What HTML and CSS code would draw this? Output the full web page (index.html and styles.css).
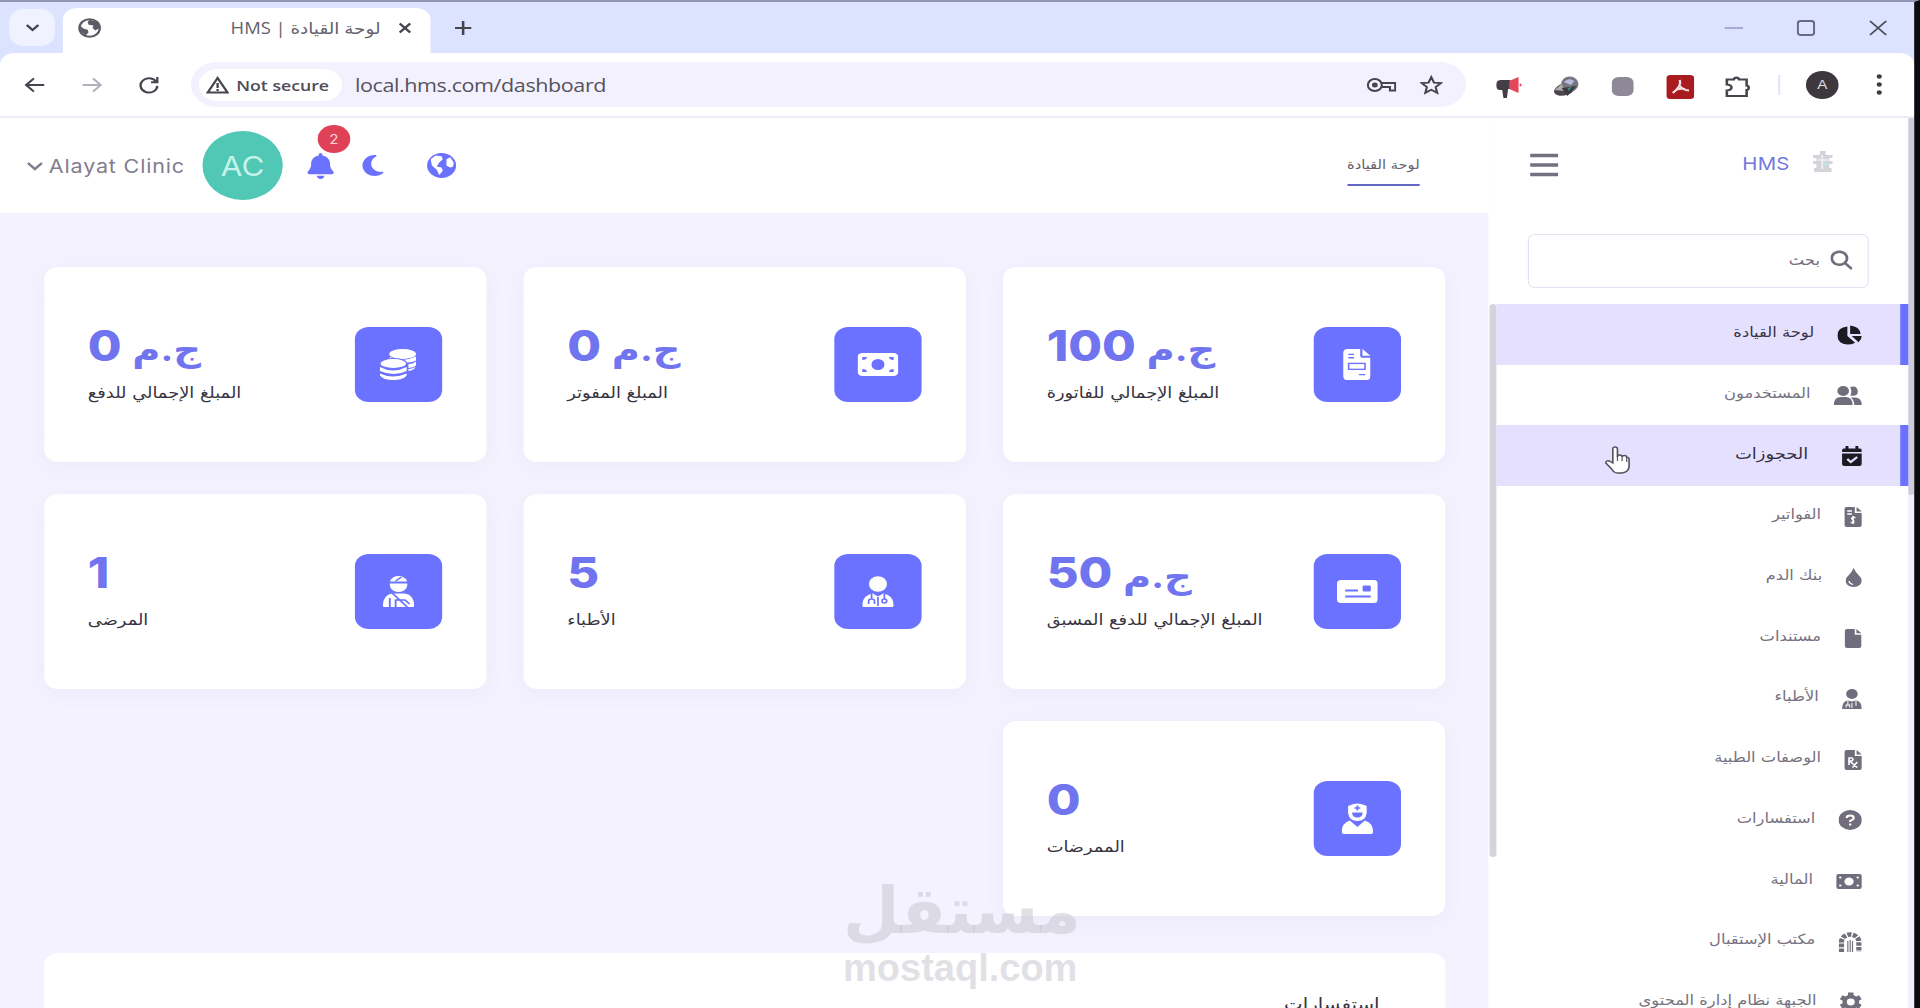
FILE: index.html
```html
<!DOCTYPE html>
<html lang="ar">
<head>
    <meta charset="UTF-8">
    <meta name="viewport" content="width=device-width, initial-scale=1.0">
    <title>HMS | لوحة القيادة</title>
    <link rel="stylesheet" href="styles.css">
</head>
<body>
    <div class="window">
        <!-- Tabs -->
        <div class="tabstrip">
            <div class="tab-menu"><svg width="14" height="9" viewBox="0 0 14 9"><path class="line" d="M2 2l5 5 5-5"/></svg></div>
            <div class="tab">
                <svg class="favicon" width="20" height="20" viewBox="0 0 24 24"><circle cx="12" cy="12" r="10.5" fill="#fff" stroke="#5d5a66" stroke-width="2.4"/><path fill="#5d5a66" d="M2 9l4 4 4 1 1 3-3 4-5-5zM12 2l8 3 2 7-4 3-3-3 1-3-5-1-1-3z"/></svg>
                <span class="tab-title" dir="rtl">لوحة القيادة | HMS</span>
                <svg width="12" height="12" viewBox="0 0 12 12"><path class="line" d="M1.5 1.5l9 9M10.5 1.5l-9 9"/></svg>
            </div>
            <svg class="new-tab" width="16" height="16" viewBox="0 0 16 16"><path class="line" d="M8 1v14M1 8h14"/></svg>
            <div class="win-controls">
                <svg width="16" height="18" viewBox="0 0 16 18"><path d="M0 9h16" stroke="#a9a8cf" stroke-width="2"/></svg>
                <svg width="16" height="18" viewBox="0 0 16 18"><rect x="1" y="2" width="14" height="14" rx="2.5" fill="none" stroke="#6c6880" stroke-width="1.8"/></svg>
                <svg width="16" height="18" viewBox="0 0 16 18"><path d="M1 2l14 14M15 2L1 16" stroke="#4d4a58" stroke-width="1.7"/></svg>
            </div>
        </div>

        <!-- Address bar -->
        <div class="toolbar">
            <div class="nav-buttons">
                <svg width="18" height="16" viewBox="0 0 20 18"><path class="line" d="M19 9H2M9 1.500L1.500 9L9 16.500"/></svg>
                <svg width="18" height="16" viewBox="0 0 20 18"><path class="line muted" d="M1 9h17M11 1.500L18.500 9L11 16.500"/></svg>
                <svg width="18" height="18" viewBox="0 0 20 20"><path class="line" d="M17 6.500A8 8 0 1 0 18 11M18 1v6h-6"/></svg>
            </div>
            <div class="omnibox">
                <div class="not-secure">
                    <svg width="20" height="18" viewBox="0 0 20 18"><path d="M10 2L1.500 16.500h17z" fill="none" stroke="#47444e" stroke-width="2"/><path d="M10 7v5M10 13v2" stroke="#47444e" stroke-width="2"/></svg>
                    <span>Not secure</span>
                </div>
                <span class="url">local.hms.com/dashboard</span>
                <svg class="key" width="26" height="16" viewBox="0 0 26 16"><circle cx="7.500" cy="8" r="6" class="line thin"/><circle cx="7.500" cy="8" r="2.500" fill="#47444e"/><path class="line thin" d="M13 6h12v7.500h-4.500V10H13"/></svg>
                <svg class="star" width="20" height="20" viewBox="0 0 24 24"><path class="line" d="M12 2.500l2.800 6.600 7.100.6-5.400 4.700 1.600 7L12 17.700l-6.100 3.700 1.600-7L2.100 9.700l7.100-.6z"/></svg>
            </div>
            <div class="extensions">
                <svg width="24" height="22" viewBox="0 0 24 22"><path d="M1 8q0-4 4-4h8v9h-2l-1 9H7l-1-8H4Q1 14 1 10z" fill="#433e45"/><path d="M12 5l8-4v16l-8-4z" fill="#e4475a"/><path d="M21 7l2 2-2 2z" fill="#e4475a"/></svg>
                <svg width="24" height="22" viewBox="0 0 24 22"><ellipse cx="11" cy="13" rx="10" ry="6" transform="rotate(-24 11 13)" fill="#4b484d"/><circle cx="15" cy="8" r="7.500" fill="#77757f"/><path d="M10 6q4-5 9-1l-3 4z" fill="#b9bce0"/><path d="M2 14l6-6 3 7z" fill="#b1aaa9"/><path d="M8 12l13-2-8 10z" fill="#3c3a3f"/><path d="M13 12l4-1-3 4z" fill="#3f8f83"/></svg>
                <svg width="19" height="20" viewBox="0 0 19 20"><rect width="19" height="19" rx="6" fill="#8d8996"/></svg>
                <svg width="24" height="24" viewBox="0 0 24 24"><rect width="24" height="24" rx="3.500" fill="#a81c1f"/><path d="M11.500 5q2 6-6 13M11.500 11q3 4 8 4.500M8 15q4-2 8-1" fill="none" stroke="#f8dfe0" stroke-width="2"/></svg>
                <svg width="24" height="24" viewBox="0 0 24 24"><path class="line" d="M3 4.500h6a2.300 2.300 0 0 1 4.500 0H20v6a2.300 2.300 0 0 1 0 4.500v6H3v-5.500q4-.5 4-3t-4-3z"/></svg>
            </div>
            <div class="chrome-avatar">A</div>
            <svg class="dots" width="6" height="24" viewBox="0 0 6 24"><circle cx="3" cy="3.500" r="2.200"/><circle cx="3" cy="11.500" r="2.200"/><circle cx="3" cy="19.500" r="2.200"/></svg>
        </div>

        <div class="page">
            <main class="main">
                <header class="header">
                    <svg class="chevron" width="14" height="10" viewBox="0 0 14 10"><path d="M1 2l6 6 6-6" fill="none" stroke="#827c8e" stroke-width="2.300"/></svg>
                    <span class="user-name">Alayat Clinic</span>
                    <div class="avatar">AC</div>
                    <div class="bell">
                        <svg width="23" height="26" viewBox="0 0 448 512"><path d="M224 0c-17.700 0-32 14.300-32 32v19.200C119 66 64 130.600 64 208v18.800c0 47-17.300 92.400-48.500 127.600l-7.400 8.300c-8.400 9.400-10.400 22.900-5.300 34.400S19.400 416 32 416H416c12.600 0 24-7.400 29.200-18.900s3.100-25-5.300-34.400l-7.400-8.300C401.300 319.200 384 273.900 384 226.800V208c0-77.400-55-142-128-156.800V32c0-17.700-14.300-32-32-32zM160 448h128q-6 60-64 64-58-4-64-64z"/></svg>
                        <span class="badge">2</span>
                    </div>
                    <svg class="moon" width="19" height="21" viewBox="0 32 384 448"><path d="M223.500 32C100 32 0 132.300 0 256S100 480 223.500 480c60.600 0 115.500-24.200 155.800-63.400c5-4.900 6.300-12.500 3.100-18.700s-10.100-9.700-17-8.500c-9.800 1.700-19.800 2.600-30.100 2.600c-96.900 0-175.500-78.800-175.500-176c0-65.800 36-123.100 89.300-153.300c6.100-3.500 9.200-10.500 7.700-17.300s-7.300-11.900-14.300-12.500c-6.300-.5-12.600-.8-19-.8z"/></svg>
                    <svg class="globe" width="25" height="25" viewBox="0 0 24 24"><circle cx="12" cy="12" r="12"/><path fill="#fff" d="M3 6l4-3.500 5 .5 1 3-3 3-2 4 4 1 1 3-3 4-2-5-4-4zM16 6l3-2 3 5-.5 4-2.500 1-3-2z"/></svg>
                    <a class="header-title" dir="rtl">لوحة القيادة</a>
                </header>

                <div class="content" dir="rtl">
                    <div class="cards">
                        <div class="card">
                            <div class="tile"><svg width="24" height="31" viewBox="0 0 384 512"><path d="M0 64Q0 0 64 0H240v112q0 32 32 32H384V448q0 64-64 64H64Q0 512 0 448zM272 0l112 112H272z"/><path class="cut" d="M72 90h80M72 144h80M224 424h88"/><rect class="cut" x="76" y="238" width="232" height="98"/></svg></div>
                            <div><div class="value"><small>ج.م</small> 100</div><div class="label">المبلغ الإجمالي للفاتورة</div></div>
                        </div>
                        <div class="card">
                            <div class="tile"><svg width="35" height="23" viewBox="0 0 35 23"><rect width="35" height="23" rx="4"/><circle class="hole" cx="17.500" cy="11.500" r="5.600"/><path class="hole" d="M4 4h4q0 3-4 3zM31 4h-4q0 3 4 3zM4 19h4q0-3-4-3zM31 19h-4q0-3 4-3z"/></svg></div>
                            <div><div class="value"><small>ج.م</small> 0</div><div class="label">المبلغ المفوتر</div></div>
                        </div>
                        <div class="card">
                            <div class="tile"><svg width="32" height="31" viewBox="0 0 32 31"><ellipse cx="20" cy="5" rx="11.500" ry="5"/><path d="M9 8q11 6 22.500-.5v4q-4 2.500-8 2-4-4-14.500-4zM25 15q4 0 6.500-2.500v4q-2 2-6.500 2.500zM25 20q3 0 6-2-1 3-6 4z"/><ellipse cx="12" cy="14.500" rx="11.500" ry="5" stroke="#6b72ff"/><path d="M.5 18q11 7 23 0v4q-11 6-23 0zM.5 24.500q11 6 23 0v2q-3 4.500-11.500 4.500T.5 26.500z"/></svg></div>
                            <div><div class="value"><small>ج.م</small> 0</div><div class="label">المبلغ الإجمالي للدفع</div></div>
                        </div>
                        <div class="card">
                            <div class="tile"><svg width="35" height="23" viewBox="0 0 35 23"><rect width="35" height="23" rx="3.500"/><path d="M7 10.500h11M7 16.500h22" stroke="#6b72ff" stroke-width="1.800"/><rect class="hole" x="22" y="5.500" width="7" height="6" rx="1"/></svg></div>
                            <div><div class="value"><small>ج.م</small> 50</div><div class="label">المبلغ الإجمالي للدفع المسبق</div></div>
                        </div>
                        <div class="card">
                            <div class="tile"><svg width="27" height="31" viewBox="0 0 27 31"><circle cx="13.500" cy="8" r="7.800"/><path d="M0 30v-2q1-9 9-10.500l4.500 3 4.500-3q8 1.500 9 10.500v2q0 1-1 1H1q-1 0-1-1z"/><path d="M8 18v5M5.500 28v-3q0-2 2.500-2t2.500 2v3M19 18v5m-2 2a2 2 0 1 0 4 0 2 2 0 1 0-4 0M13.500 21v9" fill="none" stroke="#6b72ff" stroke-width="1.500"/></svg></div>
                            <div><div class="value">5</div><div class="label">الأطباء</div></div>
                        </div>
                        <div class="card">
                            <div class="tile"><svg width="27" height="31" viewBox="0 0 27 31"><path d="M6 5.500Q8 0 13.500 0T21 5.500zM6 7.500h15v2q-1 6.500-7.500 6.500T6 9.500zM0 30q0-11 8-12.500h11q8 1.500 8 12.500 0 1-1 1H1q-1 0-1-1z"/><path d="M8 17l13 14M11 31v-7l8 0 4 4M6 22v9M11 5l5-4" fill="none" stroke="#6b72ff" stroke-width="1.600"/></svg></div>
                            <div><div class="value">1</div><div class="label">المرضى</div></div>
                        </div>
                        <div class="card">
                            <div class="tile"><svg width="27" height="31" viewBox="0 0 27 31"><path d="M5.500 3q8-5 16 0v7q-1 8-8 8t-8-8zM0 29q0-9 7-11.500l6.500 6.500 6.500-6.500q7 2.500 7 11.500 0 2-2 2H2q-2 0-2-2z"/><path class="hole" d="M9 9.500h9q0 5-4.500 5T9 9.500zM12.700 2.500h1.600v1.700H16v1.600h-1.700v1.700h-1.600V5.800H11V4.200h1.700z"/></svg></div>
                            <div><div class="value">0</div><div class="label">الممرضات</div></div>
                        </div>
                    </div>
                    <section class="panel">
                        <h3 class="panel-title">استفسارات</h3>
                    </section>
                </div>
            </main>

            <aside class="sidebar" dir="rtl">
                <div class="brand">
                    <svg width="17" height="24" viewBox="0 0 17 24" fill="#d5d3da"><path d="M6 0h5v4h6v3h-3v3h3v3h-3v4h2v4H1v-4h2v-4H0v-3h3V7H0V4h6z"/><path d="M8 4v14M4 9h9" stroke="#f1f2f2" stroke-width="1.500"/><path d="M9 11h3v4H9z" fill="#bfe3de"/></svg>
                    <span class="brand-name">HMS</span>
                    <svg class="hamburger" width="26" height="24" viewBox="0 0 26 24"><path d="M1 2.500h24M1 12h24M1 21.500h24" stroke="#75707f" stroke-width="3.500"/></svg>
                </div>
                <div class="search">
                    <svg width="19" height="20" viewBox="0 0 512 512"><path d="M416 208c0 45.900-14.900 88.300-40 122.700L502.600 457.400c12.500 12.500 12.500 32.800 0 45.300s-32.800 12.500-45.300 0L330.700 376c-34.400 25.200-76.800 40-122.700 40C93.100 416 0 322.900 0 208S93.100 0 208 0S416 93.100 416 208zM208 352a144 144 0 1 0 0-288 144 144 0 1 0 0 288z"/></svg>
                    <span>بحث</span>
                </div>
                <nav class="menu">
                    <a class="item active"><svg width="21" height="20" viewBox="0 0 22 20"><path d="M9 1v10l7 7q-3 2-7 2Q0 19 0 10.500T9 1zM11.500 0Q20 1 21 9h-9.500zM13 11h9q0 3.500-3 6.500z"/></svg><span>لوحة القيادة</span></a>
                    <a class="item"><svg width="24" height="19" viewBox="0 0 24 19"><circle cx="8" cy="5" r="5"/><path d="M0 19q0-8 6-8h4q6 0 6 8zM14 9.500q2-4 0-8.500 6-2 6.500 4T14 9.500zM14.500 11.500H18q6 0 6 7.500h-6.500q0-5-3-7.500z"/></svg><span>المستخدمون</span></a>
                    <a class="item active hover"><svg width="17" height="20" viewBox="0 0 17 20"><path d="M3 0h2.500v2.500h6V0H14v2.500h1.500q1.500 0 1.500 2V6H0V4.500q0-2 1.500-2H3zM0 7.500h17V18q0 2-2 2H2q-2 0-2-2z"/><path d="M4.500 13l3 3L13 11" fill="none" stroke="#e6e0ff" stroke-width="2"/></svg><span>الحجوزات</span></a>
                    <a class="item"><svg width="15" height="20" viewBox="0 0 15 20"><path d="M2 0h7v6h6v12q0 2-2 2H2q-2 0-2-2V2q0-2 2-2zM10.500 0L15 4.500h-4.500z"/><path d="M2.500 4h4M2.500 7h4M9.500 10.500H7q-1.500 1 0 2t1 3H5.500M7.500 9v8" fill="none" stroke="#fff" stroke-width="1.300"/></svg><span>الفواتير</span></a>
                    <a class="item"><svg width="14" height="19" viewBox="0 0 14 19"><path d="M7 0q1.500 4 4.500 7.500Q14 10 14 12.500 13.500 19 7 19T0 12.500Q0 10 2.500 7.500 5.500 4 7 0z"/><path d="M3 13q.5 3 3.500 3.500" fill="none" stroke="#fff" stroke-width="1.200"/></svg><span>بنك الدم</span></a>
                    <a class="item"><svg width="15" height="19" viewBox="0 0 15 20"><path d="M2 0h7v6h6v12q0 2-2 2H2q-2 0-2-2V2q0-2 2-2zM10.500 0L15 4.500h-4.500z"/></svg><span>مستندات</span></a>
                    <a class="item"><svg width="17" height="20" viewBox="0 0 17 20"><circle cx="8.500" cy="5" r="5"/><path d="M0 20q0-8 5-8.500l3.500 1 3.500-1q5 .5 5 8.500z"/><path d="M5 12v4M3.500 18.500V16h3v2.500M12 12v5M8.500 14v5" fill="none" stroke="#fff" stroke-width=".9"/></svg><span>الأطباء</span></a>
                    <a class="item"><svg width="15" height="20" viewBox="0 0 15 20"><path d="M2 0h7v6h6v12q0 2-2 2H2q-2 0-2-2V2q0-2 2-2zM10.500 0L15 4.500h-4.500z"/><path d="M4 15V8h2.500q2 1.500 0 3H4.500l6.500 6.500M11 12l-4 5.500" fill="none" stroke="#fff" stroke-width="1.400"/></svg><span>الوصفات الطبية</span></a>
                    <a class="item"><svg width="20" height="20" viewBox="0 0 20 20"><circle cx="10" cy="10" r="10"/><path d="M7 8q0-2.500 3-2.500T13 8q0 1.500-3 2.800V12M10 13.500V15.500" fill="none" stroke="#fff" stroke-width="1.900"/></svg><span>استفسارات</span></a>
                    <a class="item"><svg width="22" height="15" viewBox="0 0 22 15"><rect width="22" height="15" rx="2"/><g fill="#fff"><circle cx="11" cy="7.500" r="4"/><circle cx="3.500" cy="3.500" r="1.100"/><circle cx="18.500" cy="3.500" r="1.100"/><circle cx="3.500" cy="11.500" r="1.100"/><circle cx="18.500" cy="11.500" r="1.100"/></g></svg><span>المالية</span></a>
                    <a class="item"><svg width="20" height="20" viewBox="0 0 20 20"><path d="M2.500 20V10a7.500 7.500 0 0 1 15 0v10" fill="none" stroke="#726d7c" stroke-width="4.500" stroke-dasharray="3.600 1.200"/><path d="M8 9v11M10 8v12M12 9v11" fill="none" stroke="#726d7c" stroke-width="1"/></svg><span>مكتب الإستقبال</span></a>
                    <a class="item"><svg width="19" height="20" viewBox="0 0 20 20"><circle cx="10" cy="10" r="5.600" fill="none" stroke="#726d7c" stroke-width="4"/><path d="M10 0v4M10 16v4M1.300 5l3.500 2M15.200 13l3.500 2M1.300 15l3.500-2M15.200 7l3.500-2" fill="none" stroke="#726d7c" stroke-width="5"/></svg><span>الجبهة نظام إدارة المحتوى</span></a>
                    <div class="menu-scroll"></div>
                    <svg class="cursor" width="24" height="30" viewBox="0 0 24 30"><path d="M8 17V3q0-2 2-2t2 2v8q0-2 2-2t2 2q0-1.500 2-1.500t2 2q2-.5 2 2V20q0 6-6 7h-4q-3 0-5-4l-5-6q0-3 3-2z" fill="#fff" stroke="#55515e" stroke-width="1.400"/><path d="M12 10v5M16 10v5M20 12v4" stroke="#55515e"/></svg>
                </nav>
            </aside>
            <div class="page-scroll"><div class="thumb"></div></div>
        </div>
    </div>

    <div class="watermark">
        <div class="wm-ar">مستقل</div>
        <div class="wm-en">mostaql.com</div>
    </div>
</body>
</html>
```

FILE: styles.css
```css
:root {
    --primary: #6b72ff;
    --page: #f5f2ff;
    --chrome: #dbe3ff;
    --grey: #726d7c;
    --ink: #47444e;
}

* {
    margin: 0;
    padding: 0;
    box-sizing: border-box;
}

body {
    width: 1920px;
    height: 1008px;
    overflow: hidden;
    background: #000;
    font-family: "Liberation Sans", "DejaVu Sans", sans-serif;
}

svg {
    display: block;
    flex: none;
}

/* the desktop is 1650 wide, shown stretched to the full screen */
.window {
    width: 1650px;
    height: 1008px;
    transform: scaleX(1.163636);
    transform-origin: 0 0;
    display: flex;
    flex-direction: column;
    background: var(--chrome);
    border-top: 2px solid #9395b5;
    border-right: 5px solid #0b0b0f;
    overflow: hidden;
}

.line {
    fill: none;
    stroke: var(--ink);
    stroke-width: 2.2;
}

.thin {
    stroke-width: 1.8;
}

.muted {
    stroke: #b4b0bb;
}

/* tabs */
.tabstrip {
    height: 51px;
    flex: none;
    display: flex;
    align-items: center;
    padding: 0 23px 0 8px;
}

.tab-menu {
    width: 39px;
    height: 37px;
    border-radius: 12px;
    background: #f1f2ff;
    display: flex;
    align-items: center;
    justify-content: center;
}

.tab {
    width: 316px;
    height: 45px;
    margin: 6px 0 0 7px;
    padding: 0 16px 6px 13px;
    border-radius: 12px 12px 0 0;
    background: #fff;
    display: flex;
    align-items: center;
}

.tab-title {
    margin-left: auto;
    margin-right: 15px;
    font-family: "Open Sans", "DejaVu Sans", sans-serif;
    font-size: 15.8px;
    color: #65616d;
    white-space: nowrap;
}

.new-tab {
    margin-left: 20px;
}

.win-controls {
    margin-left: auto;
    display: flex;
    gap: 46px;
}

/* toolbar */
.toolbar {
    height: 65px;
    flex: none;
    display: flex;
    align-items: center;
    padding-left: 21px;
    background: #fff;
    border-radius: 12px 12px 0 0;
    border-bottom: 2px solid #f1eaf7;
}

.nav-buttons {
    display: flex;
    align-items: center;
    gap: 31px;
    width: 143px;
}

.omnibox {
    width: 1096px;
    height: 45px;
    border-radius: 23px;
    background: #f4f1ff;
    display: flex;
    align-items: center;
    padding: 0 20px 0 7px;
}

.not-secure {
    width: 123px;
    height: 32px;
    padding-left: 6px;
    border-radius: 16px;
    background: #fff;
    display: flex;
    align-items: center;
    gap: 6px;
    font: 600 15.200px "Open Sans", sans-serif;
    color: #504c57;
    white-space: nowrap;
}

.url {
    margin-left: 11px;
    font: 18.5px "Open Sans", sans-serif;
    letter-spacing: -0.35px;
    color: #56525d;
}

.key {
    margin-left: auto;
}

.star {
    margin-left: 20px;
}

.extensions {
    display: grid;
    grid-template-columns: repeat(5, 49px);
    justify-items: center;
    align-items: center;
    margin-left: 12px;
    padding-right: 12px;
    width: 258px;
    height: 20px;
    border-right: 2px solid #e8e5f6;
}

.chrome-avatar {
    width: 28px;
    height: 28px;
    margin-left: 22px;
    border-radius: 50%;
    background: #3d383e;
    color: #e5dfe4;
    font-size: 13px;
    line-height: 28px;
    text-align: center;
}

.dots {
    margin-left: 32px;
    fill: #3e3b44;
}

/* page */
.page {
    flex: 1;
    min-height: 0;
    display: flex;
    background: var(--page);
}

.main {
    width: 1279px;
    display: flex;
    flex-direction: column;
}

.header {
    height: 95px;
    flex: none;
    padding: 0 59px 0 23px;
    background: #fff;
    display: flex;
    align-items: center;
    font-family: Inter, sans-serif;
}

.header svg {
    fill: var(--primary);
}

.user-name {
    width: 132px;
    margin-left: 5px;
    font-size: 18.5px;
    letter-spacing: 0.7px;
    color: #827c8e;
    white-space: nowrap;
}

.avatar {
    width: 69px;
    height: 69px;
    border-radius: 50%;
    background: #50c8b5;
    color: #c6f3ea;
    font-size: 27px;
    line-height: 71px;
    text-align: center;
}

.bell {
    position: relative;
    margin-left: 21px;
}

.badge {
    position: absolute;
    left: 9px;
    top: -28px;
    width: 28px;
    height: 28px;
    border-radius: 50%;
    background: #df4256;
    color: #fbd5da;
    font-size: 13px;
    line-height: 28px;
    text-align: center;
}

.moon {
    margin-left: 24px;
}

.globe {
    margin-left: 37px;
}

.header-title {
    margin-left: auto;
    padding: 10px 0;
    border-bottom: 2px solid #6266c4;
    font-family: "DejaVu Sans", sans-serif;
    font-size: 12.6px;
    line-height: 19px;
    color: #65616d;
}

.content {
    flex: 1;
    min-height: 0;
    padding: 53.5px 37.5px 0 37.5px;
    background: var(--page);
}

.cards {
    display: grid;
    grid-template-columns: repeat(3, 380px);
    grid-auto-rows: 195px;
    gap: 32px;
}

.card {
    padding: 0 38px;
    border-radius: 12px;
    background: #fff;
    box-shadow: 0 5px 20px rgba(100, 80, 160, 0.06);
    display: flex;
    align-items: center;
    justify-content: space-between;
}

.tile {
    width: 75px;
    height: 75px;
    border-radius: 12px;
    background: var(--primary);
    display: flex;
    align-items: center;
    justify-content: center;
    fill: #fff;
}

.hole {
    fill: var(--primary);
}

.cut {
    fill: none;
    stroke: var(--primary);
    stroke-width: 22;
}

.value {
    height: 57px;
    font-family: Inter, "DejaVu Sans", sans-serif;
    font-weight: 800;
    font-size: 42px;
    line-height: 48px;
    color: #7074ee;
    text-align: left;
    white-space: nowrap;
}

.value small {
    font-size: 33px;
    font-weight: 700;
}

.label {
    font-family: "DejaVu Sans", sans-serif;
    font-size: 15.3px;
    line-height: 28px;
    color: #37333f;
    text-align: left;
    white-space: nowrap;
}

.panel {
    margin-top: 37px;
    height: 200px;
    padding: 41px 56px 0;
    border-radius: 12px;
    background: #fff;
}

.panel-title {
    font-family: "DejaVu Sans", sans-serif;
    font-weight: 400;
    font-size: 17px;
    color: #37333f;
}

/* sidebar */
.sidebar {
    width: 361px;
    display: flex;
    flex-direction: column;
    background: #fff;
}

.brand {
    height: 95px;
    flex: none;
    display: flex;
    align-items: center;
    padding: 0 65px 5px 35px;
}

.brand-name {
    margin-right: 20px;
    font: 17.5px Inter, sans-serif;
    letter-spacing: 0.2px;
    color: #7477e2;
}

.hamburger {
    margin: 4px auto 0 0;
}

.search {
    width: 293px;
    height: 54px;
    flex: none;
    margin: 21px 34px 16px 0;
    padding: 0 13px 2px;
    border: 1px solid #e9dff0;
    border-radius: 6px;
    display: flex;
    align-items: center;
    gap: 9px;
    fill: var(--grey);
    color: var(--grey);
    font: 14px "DejaVu Sans", sans-serif;
}

.menu {
    position: relative;
    flex: 1;
    min-height: 0;
}

.item {
    height: 60.7px;
    margin-left: 7px;
    padding: 1px 40px 0 0;
    border-right: 0 solid var(--primary);
    display: flex;
    align-items: center;
    gap: 20px;
    fill: var(--grey);
    color: #77727f;
    font: 14px "DejaVu Sans", sans-serif;
    white-space: nowrap;
}

.item span {
    padding-bottom: 5px;
}

.item.active {
    padding-right: 33px;
    border-right-width: 7px;
    background: #e6e0ff;
    fill: #1d1a24;
    color: #37333f;
}

.item.hover {
    gap: 29px;
    font-size: 15.4px;
}

.menu-scroll {
    position: absolute;
    left: 1px;
    top: 0;
    width: 6px;
    height: 553px;
    border-radius: 3px;
    background: #d6d3df;
}

.cursor {
    position: absolute;
    left: 99px;
    top: 142px;
}

.page-scroll {
    width: 5px;
    background: #f1eeff;
}

.thumb {
    height: 377px;
    border-radius: 0 0 3px 3px;
    background: #cfccd8;
}

/* watermark over everything */
.watermark {
    position: absolute;
    left: 843px;
    top: 875px;
    width: 233px;
    text-align: center;
    color: rgba(196, 195, 203, 0.5);
}

.wm-ar {
    height: 72px;
    font: 700 65px/72px "DejaVu Sans", sans-serif;
    white-space: nowrap;
}

.wm-en {
    font: 700 38px/42px "Liberation Sans", sans-serif;
}
```
